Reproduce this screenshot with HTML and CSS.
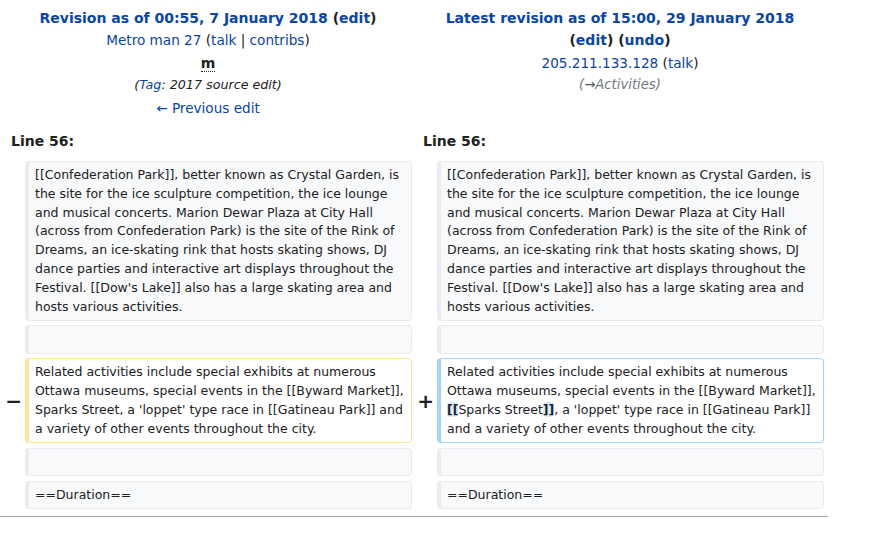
FILE: index.html
```html
<!DOCTYPE html>
<html lang="en">
<head>
<meta charset="utf-8">
<title>Diff</title>
<link rel="stylesheet" href="styles.css">
</head>
<body>
<div class="diff">
  <div class="title">
    <div class="t-head"><a href="#">Revision as of 00:55, 7 January 2018</a> (<a href="#">edit</a>)</div>
    <div class="t-line"><a href="#">Metro man 27</a> (<a href="#">talk</a> | <a href="#">contribs</a>)</div>
    <div class="t-line"><abbr class="minor" title="This is a minor edit">m</abbr></div>
    <div class="comment">(<a href="#">Tag</a>: 2017 source edit)</div>
    <div class="t-line"><a href="#">← Previous edit</a></div>
  </div>
  <div class="title">
    <div class="t-head"><a href="#">Latest revision as of 15:00, 29 January 2018</a></div>
    <div class="t-head">(<a href="#">edit</a>) (<a href="#">undo</a>)</div>
    <div class="t-line"><a href="#">205.211.133.128</a> (<a href="#">talk</a>)</div>
    <div class="summary">(<span class="arrow">→</span>Activities)</div>
  </div>

  <div class="lineno">Line 56:</div>
  <div class="lineno">Line 56:</div>

  <div class="marker"></div>
  <div class="line context">[[Confederation Park]], better known as Crystal Garden, is the site for the ice sculpture competition, the ice lounge and musical concerts. Marion Dewar Plaza at City Hall (across from Confederation Park) is the site of the Rink of Dreams, an ice-skating rink that hosts skating shows, DJ dance parties and interactive art displays throughout the Festival. [[Dow's Lake]] also has a large skating area and hosts various activities.</div>
  <div class="marker"></div>
  <div class="line context">[[Confederation Park]], better known as Crystal Garden, is the site for the ice sculpture competition, the ice lounge and musical concerts. Marion Dewar Plaza at City Hall (across from Confederation Park) is the site of the Rink of Dreams, an ice-skating rink that hosts skating shows, DJ dance parties and interactive art displays throughout the Festival. [[Dow's Lake]] also has a large skating area and hosts various activities.</div>

  <div class="marker"></div>
  <div class="line context"><br></div>
  <div class="marker"></div>
  <div class="line context"><br></div>

  <div class="marker"><span class="sign">−</span></div>
  <div class="line deleted">Related activities include special exhibits at numerous Ottawa museums, special events in the [[Byward Market]], Sparks Street, a 'loppet' type race in [[Gatineau Park]] and a variety of other events throughout the city.</div>
  <div class="marker"><span class="sign">+</span></div>
  <div class="line added">Related activities include special exhibits at numerous Ottawa museums, special events in the [[Byward Market]], <ins class="chg">[[</ins>Sparks Street<ins class="chg">]]</ins>, a 'loppet' type race in [[Gatineau Park]] and a variety of other events throughout the city.</div>

  <div class="marker"></div>
  <div class="line context"><br></div>
  <div class="marker"></div>
  <div class="line context"><br></div>

  <div class="marker"></div>
  <div class="line context">==Duration==</div>
  <div class="marker"></div>
  <div class="line context">==Duration==</div>
</div>
<hr class="rule">
</body>
</html>
```

FILE: styles.css
```css
html, body {
  margin: 0;
  padding: 0;
  background: #ffffff;
}

body {
  font-family: "DejaVu Sans", sans-serif;
  color: #202122;
  width: 828px;
}

a {
  color: #0645ad;
  text-decoration: none;
}

.diff {
  display: grid;
  grid-template-columns: 17px 387px 17px 387px;
  column-gap: 4px;
  row-gap: 4.6px;
  padding: 7px 4px 0;
}

.title {
  grid-column: span 2;
  text-align: center;
  font-size: 14px;
  line-height: 22.4px;
  padding-bottom: 2px;
}

.t-head {
  font-weight: bold;
  font-size: 14px;
}

.t-line {
  font-size: 13.6px;
}

.minor {
  font-weight: bold;
  font-size: 14px;
  text-decoration: none;
  border-bottom: 1px dotted #202122;
  cursor: help;
}

.comment {
  font-style: italic;
  font-size: 12.7px;
}

.summary {
  font-style: italic;
  font-size: 13.2px;
  color: #72777d;
}

.arrow {
  font-style: normal;
  color: #54595d;
}

.lineno {
  grid-column: span 2;
  font-weight: bold;
  font-size: 14px;
  line-height: 22.4px;
  padding: 4px 7px;
}

.marker {
  display: flex;
  align-items: center;
  justify-content: flex-end;
  font-weight: bold;
  font-size: 20px;
  line-height: 1;
}

.sign {
  margin-right: -1px;
}

.line {
  font-size: 12.5px;
  line-height: 18.86px;
  border-style: solid;
  border-width: 1px 1px 1px 4px;
  border-radius: 4px;
  padding: 4.2px 5px 3.2px 6px;
  word-wrap: break-word;
}

.context {
  background: #f8f9fa;
  border-color: #eaecf0;
}

.deleted {
  background: #ffffff;
  border-color: #ffe49c;
}

.added {
  background: #ffffff;
  border-color: #a3d3ff;
}

.chg {
  text-decoration: none;
  font-weight: bold;
  background: #d8ecff;
  border-radius: 4px;
}

.rule {
  margin: 7px 0 0;
  border: 0;
  border-top: 1px solid #a2a9b1;
  height: 0;
}
```
